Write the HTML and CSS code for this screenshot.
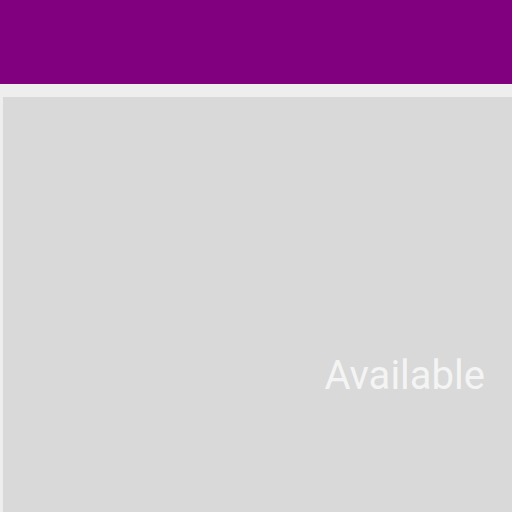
FILE: index.html
```html
<!DOCTYPE html>
<html>
<head>
<meta charset="utf-8">
<link rel="stylesheet" href="styles.css">
</head>
<body>
<header class="topbar"></header>
<main class="panel">
  <div class="status">Available</div>
</main>
</body>
</html>
```
FILE: styles.css
```css
html, body {
  margin: 0;
  padding: 0;
  width: 512px;
  height: 512px;
  overflow: hidden;
  background: #eeeeee;
  font-family: Roboto, "Noto Sans", sans-serif;
}
.topbar {
  height: 84px;
  background: #800080;
}
.panel {
  margin: 13px 0 0 3px;
  height: 415px;
  background: #d9d9d9;
  display: flex;
  justify-content: flex-end;
  padding: 255px 27px 0 0;
  box-sizing: border-box;
}
.status {
  font-size: 40px;
  line-height: 47px;
  height: 47px;
  color: #f4f4f4;
}
```
